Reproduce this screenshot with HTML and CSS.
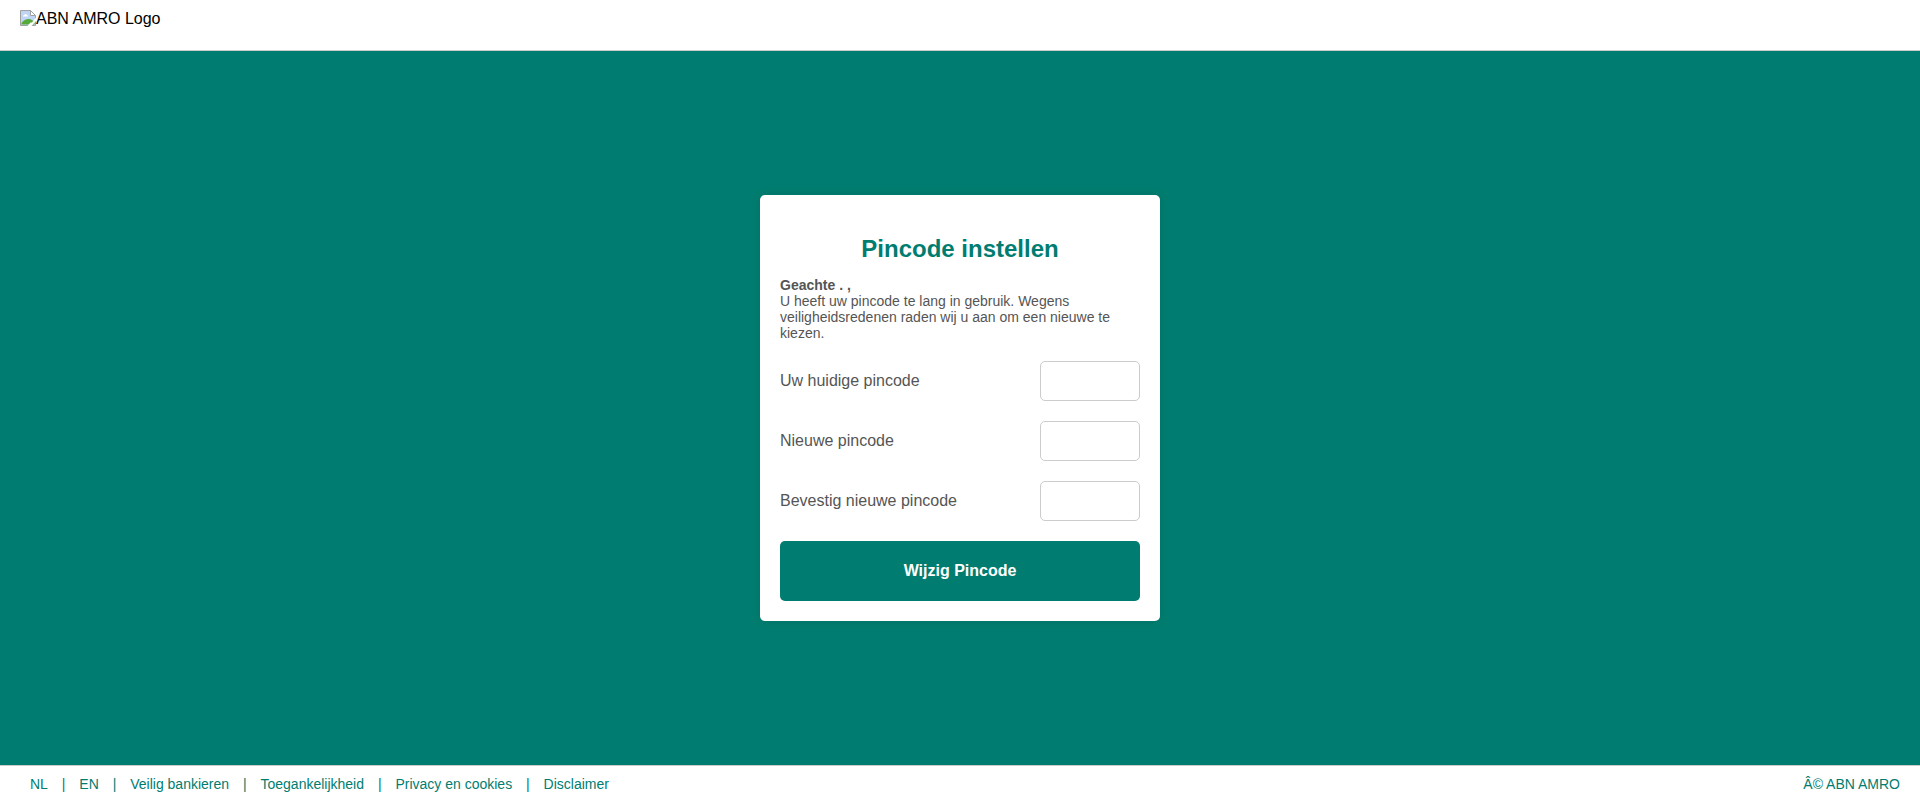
FILE: index.html
```html
<!DOCTYPE html>
<html lang="nl">
<head>
<meta charset="utf-8">
<title>Pincode instellen</title>
<link rel="stylesheet" href="styles.css">
</head>
<body>
<header class="header">
  <div class="logo">
    <svg class="logo-icon" width="16" height="16" viewBox="0 0 16 16" aria-hidden="true">
      <path d="M.5.5h10l5 5v10H.5z" fill="#fff"/>
      <path d="M1 1h9v5h5v9H1z" fill="#c0d5f5"/>
      <path d="M3 6.500c0-1 .7-1.500 1.300-1.500.3-1.300 2.200-1.300 2.500 0 .8 0 1.200.7 1.200 1.500z" fill="#fff"/>
      <path d="M1.500 14.500V13C3.500 10.500 6 9 8.500 9s4.500 1.500 6 3v2.500z" fill="#55ab37"/>
      <path d="M10.500.5l5 5h-5z" fill="#fff"/>
      <path d="M.5 15.500V.5h10l5 5v10zM10.500.5v5h5" fill="none" stroke="#a0a0a0"/>
      <path d="M16 7.500v3.500L11.500 16H7.500l3-3.500h1.500z" fill="#fff"/>
    </svg><span>ABN AMRO Logo</span>
  </div>
</header>
<main class="main">
  <form class="card">
    <h2 class="title">Pincode instellen</h2>
    <p class="intro"><b>Geachte . ,</b><br>U heeft uw pincode te lang in gebruik. Wegens veiligheidsredenen raden wij u aan om een nieuwe te kiezen.</p>
    <div class="field">
      <label for="current">Uw huidige pincode</label>
      <input class="pin" type="password" id="current">
    </div>
    <div class="field">
      <label for="new">Nieuwe pincode</label>
      <input class="pin" type="password" id="new">
    </div>
    <div class="field">
      <label for="confirm">Bevestig nieuwe pincode</label>
      <input class="pin" type="password" id="confirm">
    </div>
    <button class="submit" type="submit">Wijzig Pincode</button>
  </form>
</main>
<footer class="footer">
  <nav class="links">
    <a href="#">NL</a> |
    <a href="#">EN</a> |
    <a href="#">Veilig bankieren</a> |
    <a href="#">Toegankelijkheid</a> |
    <a href="#">Privacy en cookies</a> |
    <a href="#">Disclaimer</a>
  </nav>
  <div>Â© ABN AMRO</div>
</footer>
</body>
</html>
```
FILE: styles.css
```css
* {
  box-sizing: border-box;
}

body {
  margin: 0;
  min-height: 100vh;
  display: flex;
  flex-direction: column;
  font-family: "Liberation Sans", Arial, sans-serif;
  font-size: 16px;
  background: #007d70;
}

.header {
  min-height: 51px;
  padding: 10px 20px;
  background: #fff;
  border-bottom: 1px solid #ccc;
}

.logo {
  display: flex;
  align-items: flex-start;
  line-height: 18px;
  color: #000;
}

.main {
  flex: 1;
  display: flex;
  align-items: center;
  justify-content: center;
}

.card {
  width: 100%;
  max-width: 400px;
  padding: 20px;
  background: #fff;
  border-radius: 5px;
  box-shadow: 0 0 10px rgba(0, 0, 0, 0.1);
}

.title {
  margin: 20px 0 15px;
  font-size: 24px;
  line-height: 27px;
  text-align: center;
  color: #007d70;
}

.intro {
  margin: 0 0 20px;
  font-size: 14px;
  line-height: 16px;
  color: #555;
}

.field {
  display: flex;
  align-items: center;
  justify-content: space-between;
  margin-bottom: 20px;
  color: #555;
}

.pin {
  width: 100px;
  height: 40px;
  padding: 10px;
  border: 1px solid #ccc;
  border-radius: 5px;
  background: #fff;
  font: inherit;
}

.submit {
  display: block;
  width: 100%;
  padding: 21px;
  border: 0;
  border-radius: 5px;
  background: #007d70;
  color: #fff;
  font: inherit;
  font-weight: bold;
  line-height: 18px;
  cursor: pointer;
}

.footer {
  display: flex;
  justify-content: space-between;
  padding: 10px 20px;
  background: #fff;
  border-top: 1px solid #ccc;
  font-size: 14px;
  line-height: 16px;
  color: #007d70;
}

.links a {
  margin: 0 10px;
  color: inherit;
  text-decoration: none;
}
```
